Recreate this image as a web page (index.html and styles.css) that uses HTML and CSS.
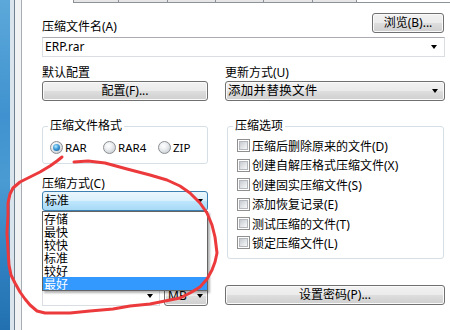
FILE: index.html
```html
<!DOCTYPE html>
<html lang="zh-CN">
<head>
<meta charset="utf-8">
<title>压缩文件名和参数</title>
<link rel="stylesheet" href="styles.css">
</head>
<body>
<div class="screen">
  <div class="frame">
    <div class="aero"></div>
    <div class="edge1"></div>
    <div class="edge2"></div>
    <div class="edge3"></div>
    <div class="edge4"></div>
  </div>
  <div class="window">
    <div class="tabs">
      <div class="tab-gap"></div>
      <div class="tab t45"></div>
      <div class="tab t49"></div>
      <div class="tab t48"></div>
      <div class="tab t48"></div>
      <div class="tab t49"></div>
      <div class="tab t45 last"></div>
      <div class="tab-rest"></div>
    </div>
    <div class="content">
      <div class="row-name">
        <span class="label name-label">压缩文件名(A)</span>
        <button class="btn browse">浏览(B)...</button>
      </div>
      <div class="combo edit name"><span class="val">ERP.rar</span><i class="arrow"></i></div>
      <div class="cols">
        <div class="col left">
          <span class="label">默认配置</span>
          <button class="btn">配置(F)...</button>
          <fieldset class="group format">
            <legend>压缩文件格式</legend>
            <div class="radios">
              <span class="ritem"><i class="radio on"></i><span class="rtxt">RAR</span></span>
              <span class="ritem"><i class="radio"></i><span class="rtxt">RAR4</span></span>
              <span class="ritem"><i class="radio"></i><span class="rtxt">ZIP</span></span>
            </div>
          </fieldset>
          <span class="label method">压缩方式(C)</span>
          <div class="combo sel"><span class="val">标准</span><i class="arrow"></i></div>
          <div class="bottom-row">
            <div class="combo edit dict"><span class="val"></span><i class="arrow"></i></div>
            <div class="combo ro unit"><span class="val">MB</span><i class="arrow"></i></div>
          </div>
          <div class="droplist">
            <div class="opt">存储</div>
            <div class="opt">最快</div>
            <div class="opt">较快</div>
            <div class="opt">标准</div>
            <div class="opt">较好</div>
            <div class="opt on">最好</div>
          </div>
        </div>
        <div class="col right">
          <span class="label">更新方式(U)</span>
          <div class="combo ro update"><span class="val">添加并替换文件</span><i class="arrow"></i></div>
          <fieldset class="group options">
            <legend>压缩选项</legend>
            <div class="check"><i class="box"></i><span>压缩后删除原来的文件(D)</span></div>
            <div class="check"><i class="box"></i><span>创建自解压格式压缩文件(X)</span></div>
            <div class="check"><i class="box"></i><span>创建固实压缩文件(S)</span></div>
            <div class="check"><i class="box"></i><span>添加恢复记录(E)</span></div>
            <div class="check"><i class="box"></i><span>测试压缩的文件(T)</span></div>
            <div class="check"><i class="box"></i><span>锁定压缩文件(L)</span></div>
          </fieldset>
          <button class="btn pwd">设置密码(P)...</button>
        </div>
      </div>
    </div>
  </div>
  <svg class="ink" width="450" height="330" viewBox="0 0 450 330">
    <polyline points="74,162 88,161 105,163 127,169 150,175 167,180 180,186 190,193 200,203 207,213 212,225 215,237 217,253 215,262 212,270 207,279 200,287 190,293 180,298 165,301 150,304 130,306 113,309 90,311 70,313 57,313 45,313 37,311 30,305 25,299 20,292 15,283 11,275 9,265 8,250 7,233 8,215 8,203 10,194 13,188 20,182 30,177 40,172 50,166 57,161 62,157" />
  </svg>
</div>
</body>
</html>
```
FILE: styles.css
```css
body {
  margin: 0;
  width: 450px;
  height: 330px;
  overflow: hidden;
  background: #ffffff;
  font-family: "Noto Sans", "Noto Sans CJK SC", sans-serif;
  font-size: 12px;
  color: #000000;
}

.screen {
  position: relative;
  display: flex;
  width: 450px;
  height: 330px;
}

.frame {
  display: flex;
  flex: none;
  width: 22px;
  height: 330px;
}
.aero {
  width: 10px;
  background: linear-gradient(180deg, #5ca8da 0%, #3f92cf 35%, #4a9bd3 55%, #2f80c0 80%, #2270b0 100%);
}
.edge1 { width: 4px; background: #d9e4ed; }
.edge2 { width: 1px; background: #71818f; }
.edge3 { width: 6px; background: #f0f2f4; }
.edge4 { width: 1px; background: #a6adb5; }

.window {
  flex: 1;
  display: flex;
  flex-direction: column;
  min-width: 0;
}

.tabs {
  display: flex;
  height: 3px;
  flex: none;
}
.tab-gap { width: 51px; }
.tab {
  box-sizing: border-box;
  height: 3px;
  border-left: 1px solid #8d9198;
  border-bottom: 1px solid #8d9198;
  background: #e6e6e6;
}
.tab.last { border-right: 1px solid #8d9198; }
.t45 { width: 45px; }
.t48 { width: 48px; }
.t49 { width: 49px; }
.tab-rest {
  flex: 1;
  box-sizing: border-box;
  border-bottom: 1px solid #8d9198;
}

.content {
  padding: 10px 5px 0 20px;
}

.label {
  display: block;
  line-height: 16px;
  white-space: nowrap;
}

.row-name {
  display: flex;
  justify-content: space-between;
  align-items: flex-start;
}
.name-label {
  margin-top: 6px;
}

.btn {
  display: block;
  box-sizing: border-box;
  height: 20px;
  width: 100%;
  padding: 0;
  border: 1px solid #707070;
  border-radius: 3px;
  background: linear-gradient(180deg, #f2f2f2 0%, #ebebeb 48%, #dddddd 52%, #cfcfcf 100%);
  box-shadow: inset 0 0 0 1px #fafafa;
  font-family: "Noto Sans", "Noto Sans CJK SC", sans-serif;
  font-size: 12px;
  line-height: 16px;
  color: #000000;
  text-align: center;
}
.btn.browse {
  width: 72px;
  margin-right: 1px;
}

.combo {
  box-sizing: border-box;
  height: 20px;
  display: flex;
  align-items: center;
  justify-content: space-between;
  padding: 0 6px 0 2px;
  line-height: 16px;
  white-space: nowrap;
}
.combo.edit {
  border: 1px solid #dadde2;
  border-top-color: #abadb3;
  background: #ffffff;
}
.combo.ro {
  border: 1px solid #707070;
  border-radius: 3px;
  background: linear-gradient(180deg, #f2f2f2 0%, #ebebeb 48%, #dddddd 52%, #cfcfcf 100%);
  box-shadow: inset 0 0 0 1px #fafafa;
}
.combo.sel {
  border: 1px solid #3c7fb1;
  border-radius: 3px;
  background: linear-gradient(180deg, #eaf6fd 0%, #d9f0fc 48%, #bee6fd 52%, #a7d9f5 100%);
  padding-right: 4px;
}
.combo.name {
  margin-top: 2px;
  padding-left: 2px;
  padding-right: 7px;
}
.combo.update .val {
  font-size: 12.5px;
  letter-spacing: 0.3px;
}

.arrow {
  display: block;
  width: 0;
  height: 0;
  border-left: 3.5px solid transparent;
  border-right: 3.5px solid transparent;
  border-top: 4px solid #000000;
}

.cols {
  display: grid;
  grid-template-columns: 166px 220px;
  column-gap: 17px;
  margin-top: 8px;
}
.col {
  display: flex;
  flex-direction: column;
  min-width: 0;
}
.col.left {
  position: relative;
}

.group {
  min-width: 0;
  margin: 18px 0 0;
  border: 1px solid #d5dfe5;
  border-radius: 3px;
}
.group legend {
  padding: 0 2px;
  margin-left: -2px;
  line-height: 14px;
  font-size: 12px;
}
.group.format {
  padding: 8px 7px 9px;
}
.group.options {
  margin: 18px 1px 0 2px;
  padding: 3.3px 7px 5.3px;
}

.radios {
  display: grid;
  grid-template-columns: 53px 55px auto;
  height: 13px;
}
.ritem {
  display: flex;
  align-items: center;
  gap: 2px;
  height: 13px;
}
.rtxt {
  font-size: 11.5px;
  line-height: 13px;
}
.radio {
  position: relative;
  box-sizing: border-box;
  width: 13px;
  height: 13px;
  flex: none;
  border: 1px solid #8b8e91;
  border-radius: 50%;
  background: radial-gradient(circle at 40% 35%, #ffffff 0%, #eef0f2 35%, #c9cdd2 85%);
}
.radio.on::after {
  content: "";
  position: absolute;
  left: 2px;
  top: 2px;
  width: 7px;
  height: 7px;
  border-radius: 50%;
  background: radial-gradient(circle at 40% 35%, #b8ecff 0%, #3c9ad8 45%, #12538f 100%);
}

.label.method {
  margin-top: 12px;
  line-height: 15px;
}

.bottom-row {
  display: flex;
  gap: 4px;
  margin-top: 75px;
}
.combo.dict {
  width: 118px;
}
.combo.unit {
  width: 44px;
  padding-left: 3px;
  padding-right: 4px;
}

.droplist {
  position: absolute;
  left: 0;
  top: 146px;
  width: 166px;
  box-sizing: border-box;
  border: 1px solid #646464;
  background: #ffffff;
  box-shadow: 2px 2px 2px rgba(0, 0, 0, 0.3);
  font-family: "Noto Sans CJK SC", sans-serif;
}
.opt {
  height: 13px;
  line-height: 13px;
  padding-left: 1px;
  font-size: 12px;
}
.opt.on {
  background: #3399ff;
  color: #ffffff;
}

.check {
  display: flex;
  align-items: center;
  gap: 2px;
  height: 19.4px;
  padding-left: 2px;
  white-space: nowrap;
}
.box {
  position: relative;
  box-sizing: border-box;
  width: 13px;
  height: 13px;
  flex: none;
  border: 1px solid #8f8f8f;
  background: #ffffff;
}
.box::after {
  content: "";
  position: absolute;
  left: 2px;
  top: 2px;
  width: 7px;
  height: 7px;
  border: 1px solid #b4b8bd;
  box-sizing: content-box;
  margin: -1px 0 0 -1px;
  background: linear-gradient(135deg, #c6cad0 0%, #e4e6e9 60%, #f6f7f8 100%);
}

.btn.pwd {
  margin-top: 26px;
}

.ink {
  position: absolute;
  left: 0;
  top: 0;
  pointer-events: none;
}
.ink polyline {
  fill: none;
  stroke: #ec3a3c;
  stroke-width: 3;
  stroke-linejoin: round;
  stroke-linecap: round;
}
```
